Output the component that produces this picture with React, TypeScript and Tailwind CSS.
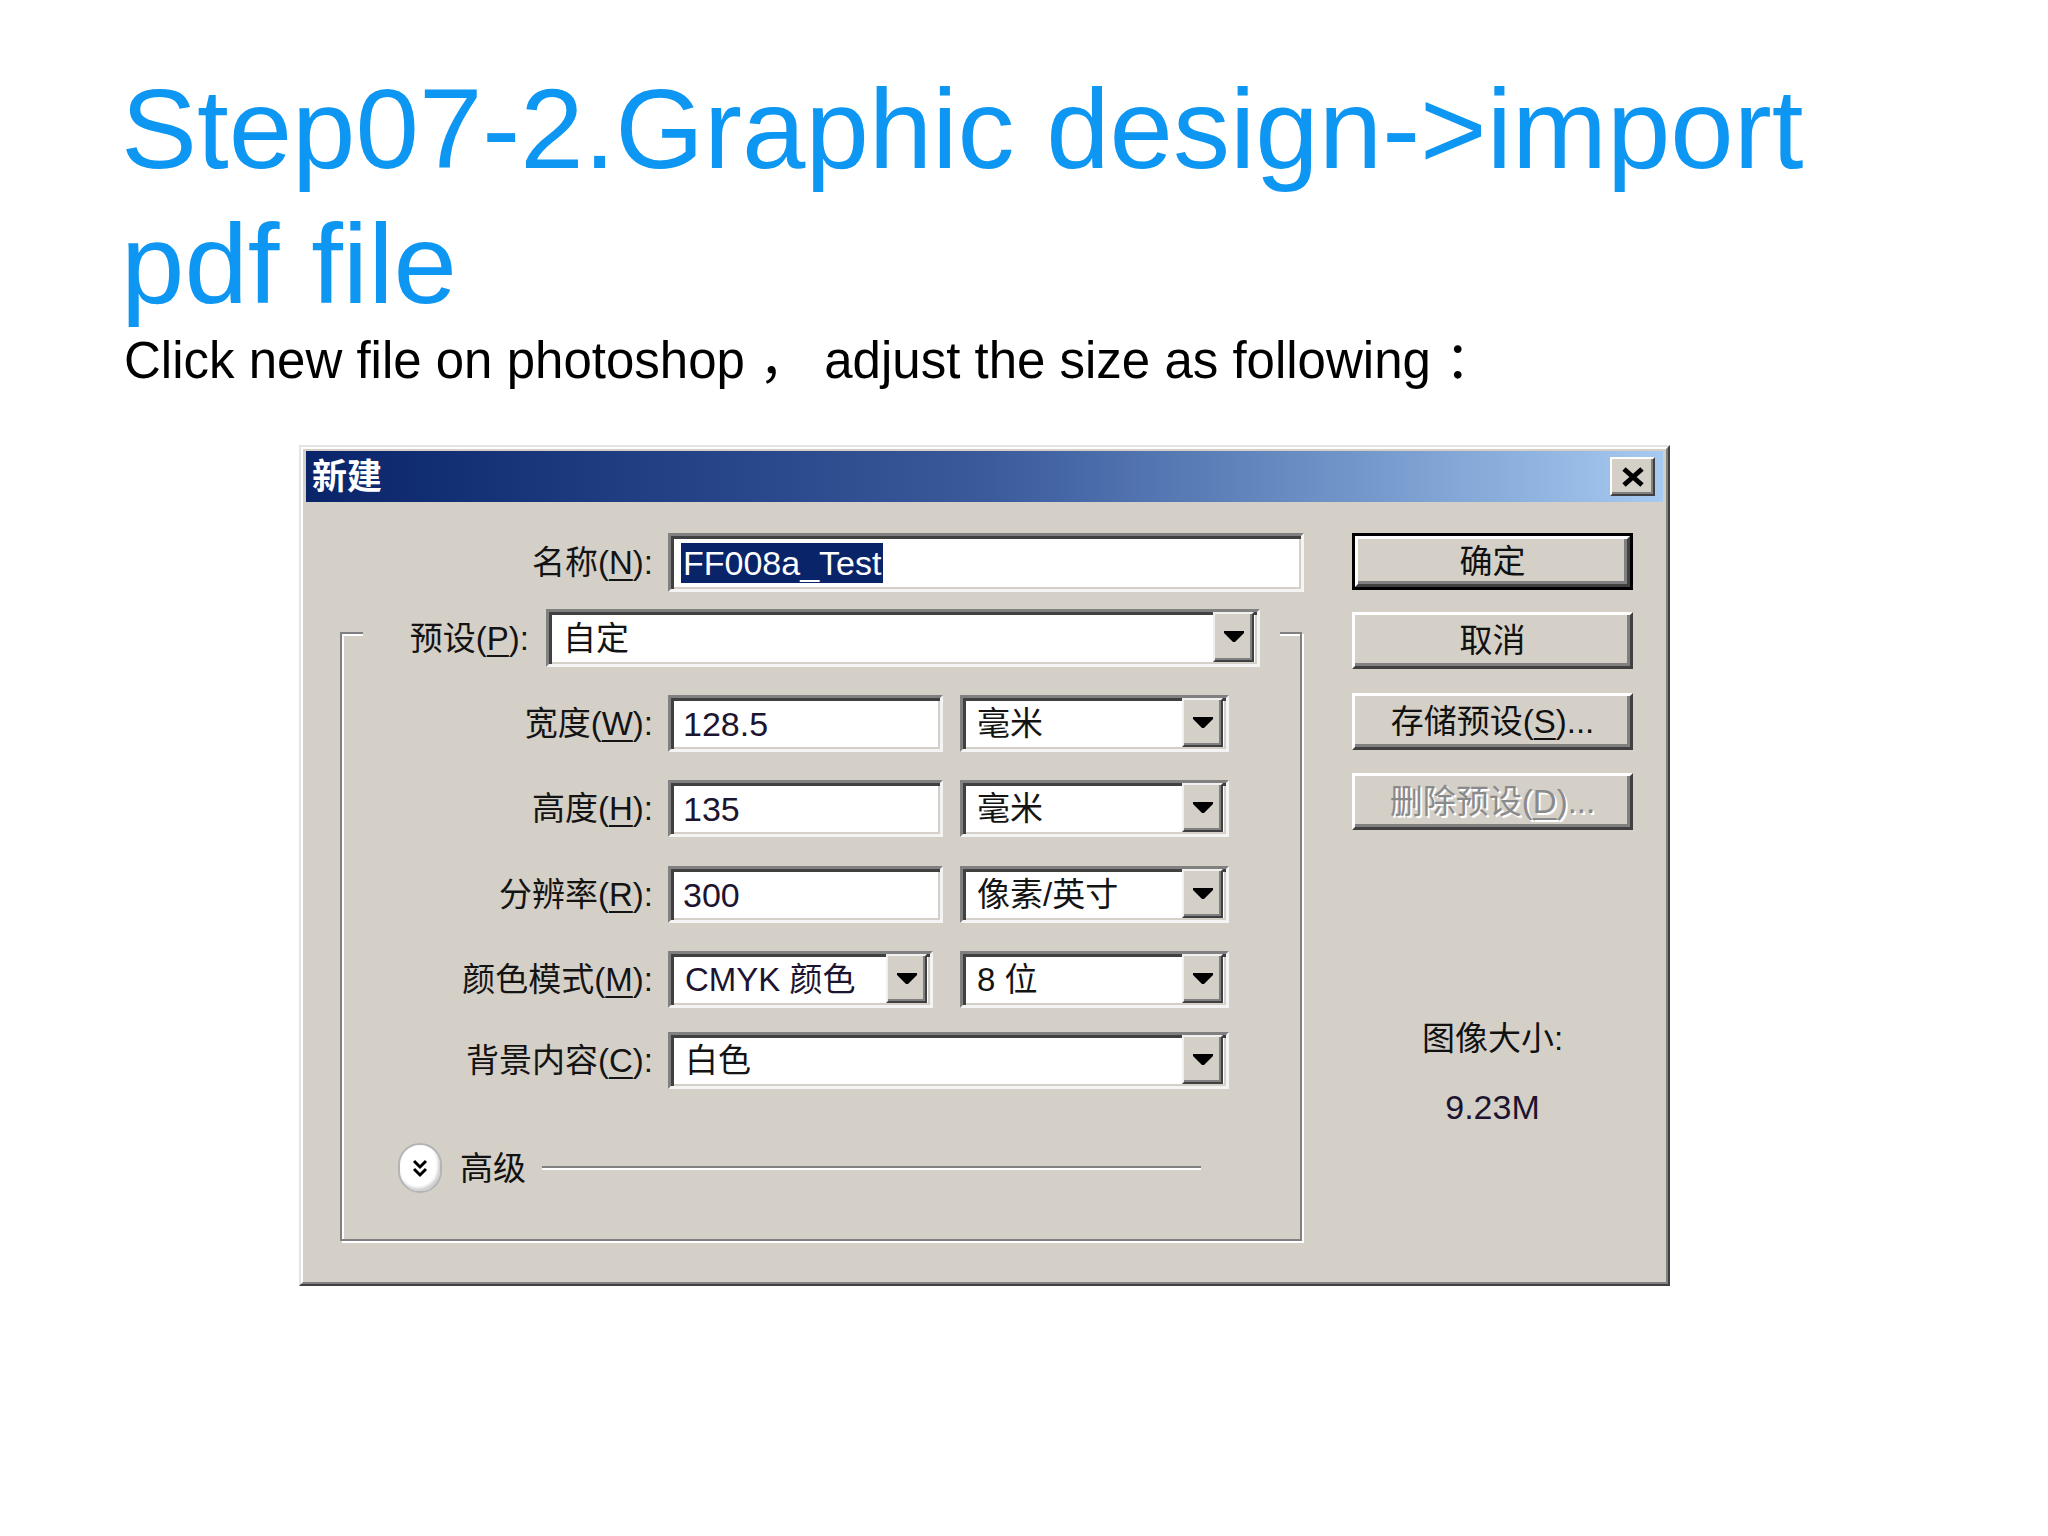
import React from 'react'

function Label({ text, k }: { text: string; k: string }) {
  return (
    <span className="text-[33px] leading-none text-[#141414] whitespace-nowrap">
      {text}(<span className="underline decoration-2 underline-offset-[5px]">{k}</span>):
    </span>
  )
}

function Arrow() {
  return (
    <svg width="20" height="12" viewBox="0 0 20 12">
      <polygon points="0,0 20,0 20,2 11,11 9,11 0,2" fill="#000" />
    </svg>
  )
}

function Field({ className, children }: { className: string; children?: React.ReactNode }) {
  return (
    <div
      className={`bg-white border-[3px] border-t-[#808080] border-l-[#808080] border-r-[#f4f4f4] border-b-[#f4f4f4] shadow-[inset_3px_3px_0_#404040,inset_-2px_-2px_0_#d4d0c8] flex items-stretch ${className}`}
    >
      {children}
    </div>
  )
}

function Select({ className, value, pad = 'pl-[14px]' }: { className: string; value: React.ReactNode; pad?: string }) {
  return (
    <Field className={className}>
      <div className={`flex-1 flex items-center ${pad} text-[33px] leading-none text-[#141414] whitespace-nowrap overflow-hidden`}>
        {value}
      </div>
      <div className="w-[41px] mr-[3px] mb-[2px] bg-[#d4d0c8] border-2 border-t-[#f0f0f0] border-l-[#f0f0f0] border-r-[#404040] border-b-[#404040] shadow-[inset_-2px_-2px_0_#808080] flex items-center justify-center">
        <Arrow />
      </div>
    </Field>
  )
}

function Input({ className, value }: { className: string; value: string }) {
  return (
    <Field className={className}>
      <div className="flex items-center pl-[12px] text-[34px] leading-none text-[#1c1430]">{value}</div>
    </Field>
  )
}

function Btn({ children, disabled }: { children: React.ReactNode; disabled?: boolean }) {
  return (
    <div className="h-full bg-[#d4d0c8] border-[3px] border-t-white border-l-white border-r-[#404040] border-b-[#404040] shadow-[inset_-3px_-3px_0_#808080] flex items-center justify-center">
      <span
        className={
          disabled
            ? 'text-[33px] leading-none text-[#8a8a8a] [text-shadow:2px_2px_0_#fff] whitespace-nowrap'
            : 'text-[33px] leading-none text-[#111] whitespace-nowrap'
        }
      >
        {children}
      </span>
    </div>
  )
}

function Row({ label, k, mt, children }: { label: string; k: string; mt: string; children: React.ReactNode }) {
  return (
    <div className={`flex items-center h-[57px] ${mt}`}>
      <div className="w-[311px] flex justify-end">
        <Label text={label} k={k} />
      </div>
      <div className="ml-[15px] flex h-full">{children}</div>
    </div>
  )
}

export default function App() {
  return (
    <div className="w-[2048px] h-[1536px] bg-white overflow-hidden font-['Liberation_Sans','Noto_Sans_CJK_SC',sans-serif]">
      <h1 className="pl-[121px] pt-[61px] text-[114px] leading-[135px] text-[#0d96f2] font-normal">
        Step07-2.Graphic design-&gt;import
        <br />
        pdf file
      </h1>
      <p className="pl-[124px] text-[51px] leading-[60px] text-black whitespace-pre">
        Click new file on photoshop ， adjust the size as following ：
      </p>

      <div className="ml-[299px] mt-[54px] w-[1371px] h-[841px] bg-[#d4d0c8] border-2 border-t-[#e4e4e4] border-l-[#e4e4e4] border-r-[#404040] border-b-[#404040]">
        <div className="h-full border-2 border-t-white border-l-white border-r-[#808080] border-b-[#808080] px-[3px] pt-[2px] flex flex-col">
          {/* title bar */}
          <div className="h-[51px] bg-linear-to-r from-[#0a246a] via-[#3a5a9c] to-[#a6caf0] flex items-center">
            <span className="ml-[6px] text-[35px] leading-none font-bold text-white">新建</span>
            <div className="ml-auto mr-[8px] w-[45px] h-[39px] bg-[#d4d0c8] border-2 border-t-white border-l-white border-r-[#404040] border-b-[#404040] shadow-[inset_-2px_-2px_0_#808080] flex items-center justify-center">
              <svg width="24" height="20" viewBox="0 0 24 20">
                <path d="M3 2 L21 18 M21 2 L3 18" stroke="#000" strokeWidth="5" />
              </svg>
            </div>
          </div>

          {/* body */}
          <div className="flex">
            <div className="w-[1046px]">
              <div className="mt-[31px] flex items-center h-[59px]">
                <div className="w-[347px] flex justify-end">
                  <Label text="名称" k="N" />
                </div>
                <Field className="ml-[15px] w-[636px] h-[59px]">
                  <div className="flex items-center ml-[10px]">
                    <span className="inline-block bg-[#0a246a] text-white text-[34px] leading-[40px] px-[2px]">FF008a_Test</span>
                  </div>
                </Field>
              </div>

              <div className="ml-[34px] mt-[40px] w-[962px] h-[609px] border-2 border-[#808080] shadow-[inset_2px_2px_0_#fff,2px_2px_0_#fff] flex flex-col">
                <div className="-mt-[25px] ml-[21px] w-[917px] h-[58px] bg-[#d4d0c8] flex items-center">
                  <div className="w-[166px] flex justify-end">
                    <Label text="预设" k="P" />
                  </div>
                  <Select className="ml-[17px] w-[714px] h-[58px]" value="自定" />
                </div>

                <Row label="宽度" k="W" mt="mt-[28px]">
                  <Input className="w-[275px] h-[57px]" value="128.5" />
                  <Select className="ml-[17px] w-[269px] h-[57px]" value="毫米" />
                </Row>
                <Row label="高度" k="H" mt="mt-[28px]">
                  <Input className="w-[275px] h-[57px]" value="135" />
                  <Select className="ml-[17px] w-[269px] h-[57px]" value="毫米" />
                </Row>
                <Row label="分辨率" k="R" mt="mt-[29px]">
                  <Input className="w-[275px] h-[57px]" value="300" />
                  <Select className="ml-[17px] w-[269px] h-[57px]" value="像素/英寸" />
                </Row>
                <Row label="颜色模式" k="M" mt="mt-[28px]">
                  <Select
                    className="w-[265px] h-[57px]"
                    pad="pl-[14px]"
                    value={<span className="text-[#1c1430]">CMYK 颜色</span>}
                  />
                  <Select className="ml-[27px] w-[269px] h-[57px]" value="8 位" />
                </Row>
                <Row label="背景内容" k="C" mt="mt-[24px]">
                  <Select className="w-[561px] h-[57px]" pad="pl-[14px]" value="白色" />
                </Row>

                <div className="mt-[54px] flex items-center">
                  <div className="ml-[56px] w-[44px] h-[50px] rounded-full bg-white border-2 border-[#b4b4b4] shadow-[inset_-2px_-3px_3px_#cfcfcf] flex items-center justify-center">
                    <svg width="16" height="20" viewBox="0 0 16 20">
                      <polyline points="2,3 8,9 14,3" fill="none" stroke="#000" strokeWidth="3" />
                      <polyline points="2,11 8,17 14,11" fill="none" stroke="#000" strokeWidth="3" />
                    </svg>
                  </div>
                  <span className="ml-[18px] text-[33px] leading-none text-[#111]">高级</span>
                  <div className="ml-[16px] w-[659px] h-[4px] border-t-2 border-t-[#808080] border-b-2 border-b-white" />
                </div>
              </div>
            </div>

            <div className="w-[281px] flex flex-col">
              <div className="mt-[31px] h-[57px] border-[3px] border-black">
                <Btn>确定</Btn>
              </div>
              <div className="mt-[22px] h-[57px]">
                <Btn>取消</Btn>
              </div>
              <div className="mt-[24px] h-[57px]">
                <Btn>
                  存储预设(<span className="underline decoration-2 underline-offset-[5px]">S</span>)...
                </Btn>
              </div>
              <div className="mt-[23px] h-[57px]">
                <Btn disabled>
                  删除预设(<span className="underline decoration-2 underline-offset-[5px]">D</span>)...
                </Btn>
              </div>
              <div className="mt-[192px] text-center text-[33px] leading-[33px] text-[#111]">图像大小:</div>
              <div className="mt-[35px] text-center text-[34px] leading-[34px] text-[#1c1430]">9.23M</div>
            </div>
          </div>
        </div>
      </div>
    </div>
  )
}
